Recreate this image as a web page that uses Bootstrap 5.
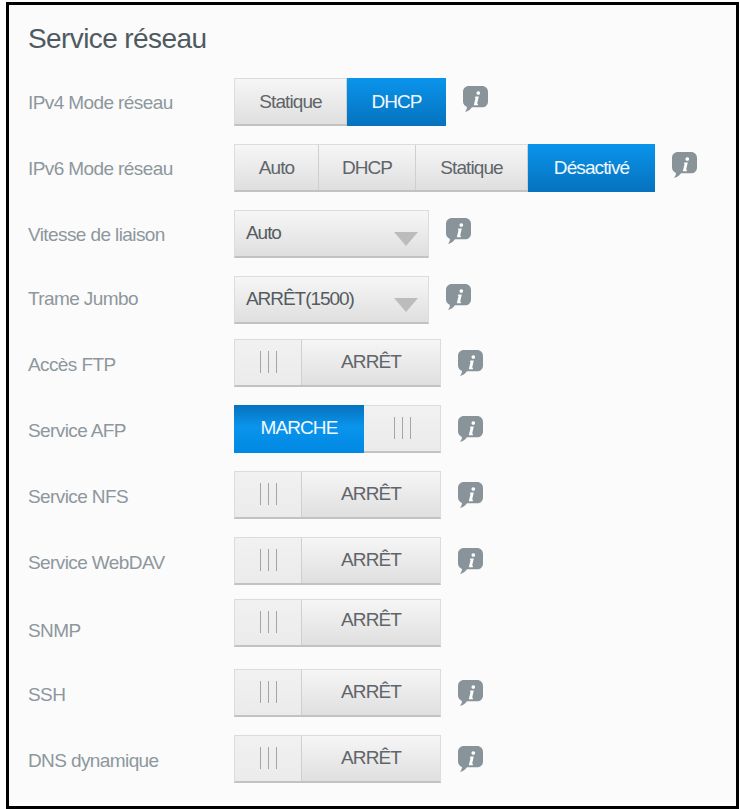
<!DOCTYPE html>
<html lang="fr">
<head>
<meta charset="utf-8">
<title>Service réseau</title>
<link href="https://cdn.jsdelivr.net/npm/bootstrap@5.3.0/dist/css/bootstrap.min.css" rel="stylesheet">
<style>
html, body { height: 809px; overflow: hidden; background: #fff; }
body { font-family: "Liberation Sans", Arial, sans-serif; }
.panel-net { width: 733px; height: 807px; margin: 2px 0 0 6px; border: 3px solid #000; background: #fbfbfb; box-shadow: inset 0 -4px 0 #fefefe; padding: 14px 0 0 19px; }
.panel-title { font-size: 28px; line-height: 40px; height: 40px; letter-spacing: -.6px; color: #4f5a60; margin: 0 0 19px; font-weight: 400; }
.net-row { height: 48px; margin-bottom: 18px; }
.net-label { width: 206px; flex: none; font-size: 19px; letter-spacing: -.6px; color: #8d979d; padding-top: 2px; }
.lbl-up { padding-top: 0; padding-bottom: 2px; }
.lbl-down { padding-top: 5px; }
.lbl-far { padding-top: 17px; }
.seg { display: flex; flex: none; height: 48px; border: 1px solid #dcdcdc; border-bottom: 2px solid #c2c2c2; background: linear-gradient(#f6f6f6, #dfdfdf); font-size: 19px; letter-spacing: -.9px; color: #5f6569; }
.seg-item { display: flex; align-items: center; justify-content: center; height: 100%; padding-top: 1px; border-right: 1px solid #cfcfcf; }
.seg-item:last-child { border-right: 0; }
.seg-on { background: linear-gradient(#0a94ec, #0672bd); color: #f2f9ff; border-right: 0; margin: -1px -1px -2px 0; height: 48px; }
.w-a { width: 112px; } .w-b { width: 99px; }
.w-c { width: 84px; } .w-d { width: 97px; } .w-e { width: 112px; } .w-f { width: 127px; }
.pick { width: 195px; justify-content: space-between; align-items: center; padding: 0 10px 0 11px; letter-spacing: -1.05px; color: #555b60; }
.pick-arrow { width: 0; height: 0; border-left: 12px solid transparent; border-right: 12px solid transparent; border-top: 14px solid #bcbcbc; margin-top: 10px; }
.sw { width: 207px; }
.sw-grip { width: 67px; height: 100%; flex: none; display: flex; justify-content: center; align-items: center; gap: 7px; background: linear-gradient(#f1f1f1, #ebebeb); border-right: 1px solid #cfcfcf; padding-bottom: 2px; }
.sw-grip span { width: 1px; height: 22px; background: #a5a5a5; }
.sw-text { flex: 1 1 auto; display: flex; align-items: center; justify-content: center; }
.sw-high .sw-text { padding-bottom: 4px; }
.sw-on { color: #5f6569; }
.sw-on .sw-text { width: 130px; flex: none; padding-bottom: 1px; margin: -1px 0 -2px -1px; height: 48px; color: #f2f9ff; background: linear-gradient(#0672bd 0, #0a94ec 45%, #0088e2); }
.sw-on .sw-grip { border-right: 0; flex: 1 1 auto; width: auto; }
.tip { width: 25px; height: 27px; flex: none; display: block; align-self: flex-start; margin-left: 17px; margin-top: 8px; }
.tip-low { margin-top: 11px; }
.gap-15 { margin-bottom: 15px; }
.gap-14 { margin-bottom: 14px; }
.gap-22 { margin-bottom: 22px; }
.defs-only { width: 0; height: 0; }
</style>
</head>
<body>
<svg class="defs-only position-absolute" aria-hidden="true">
  <symbol id="tip-i" viewBox="0 0 25 27">
    <path d="M6 0h13c3.500 0 6 2.500 6 6v9.500c0 3.500-2.500 5.800-6 5.800H9c-1.500 2.200-4 4.200-7 4.700 1.200-1.500 2-3.300 2-5C1.500 20 0 18 0 15.500V6c0-3.500 2.500-6 6-6z" fill="#89939a"/>
    <path d="M15.300 5.200a1.800 1.800 0 1 1-.01 0zM12.400 10.400h3.400l-1.700 7.300h1l-.4 1.500h-3.900l1.800-7.400h-.9z" fill="#fff"/>
  </symbol>
</svg>
<main class="panel-net">
  <h1 class="panel-title">Service réseau</h1>

  <div class="net-row d-flex align-items-center">
    <div class="net-label">IPv4 Mode réseau</div>
    <div class="seg"><div class="seg-item w-a">Statique</div><div class="seg-item seg-on w-b">DHCP</div></div>
    <svg class="tip"><use href="#tip-i"/></svg>
  </div>

  <div class="net-row d-flex align-items-center">
    <div class="net-label">IPv6 Mode réseau</div>
    <div class="seg"><div class="seg-item w-c">Auto</div><div class="seg-item w-d">DHCP</div><div class="seg-item w-e">Statique</div><div class="seg-item seg-on w-f">Désactivé</div></div>
    <svg class="tip"><use href="#tip-i"/></svg>
  </div>

  <div class="net-row d-flex align-items-center">
    <div class="net-label">Vitesse de liaison</div>
    <div class="seg pick"><span>Auto</span><i class="pick-arrow"></i></div>
    <svg class="tip"><use href="#tip-i"/></svg>
  </div>

  <div class="net-row d-flex align-items-center gap-15">
    <div class="net-label lbl-up">Trame Jumbo</div>
    <div class="seg pick"><span>ARRÊT(1500)</span><i class="pick-arrow"></i></div>
    <svg class="tip"><use href="#tip-i"/></svg>
  </div>

  <div class="net-row d-flex align-items-center">
    <div class="net-label lbl-down">Accès FTP</div>
    <div class="seg sw"><div class="sw-grip"><span></span><span></span><span></span></div><div class="sw-text">ARRÊT</div></div>
    <svg class="tip tip-low"><use href="#tip-i"/></svg>
  </div>

  <div class="net-row d-flex align-items-center">
    <div class="net-label lbl-down">Service AFP</div>
    <div class="seg sw sw-on"><div class="sw-text">MARCHE</div><div class="sw-grip"><span></span><span></span><span></span></div></div>
    <svg class="tip tip-low"><use href="#tip-i"/></svg>
  </div>

  <div class="net-row d-flex align-items-center">
    <div class="net-label lbl-down">Service NFS</div>
    <div class="seg sw"><div class="sw-grip"><span></span><span></span><span></span></div><div class="sw-text">ARRÊT</div></div>
    <svg class="tip tip-low"><use href="#tip-i"/></svg>
  </div>

  <div class="net-row d-flex align-items-center gap-14">
    <div class="net-label lbl-down">Service WebDAV</div>
    <div class="seg sw"><div class="sw-grip"><span></span><span></span><span></span></div><div class="sw-text">ARRÊT</div></div>
    <svg class="tip tip-low"><use href="#tip-i"/></svg>
  </div>

  <div class="net-row d-flex align-items-center gap-22">
    <div class="net-label lbl-far">SNMP</div>
    <div class="seg sw sw-high"><div class="sw-grip"><span></span><span></span><span></span></div><div class="sw-text">ARRÊT</div></div>
  </div>

  <div class="net-row d-flex align-items-center">
    <div class="net-label lbl-down">SSH</div>
    <div class="seg sw"><div class="sw-grip"><span></span><span></span><span></span></div><div class="sw-text">ARRÊT</div></div>
    <svg class="tip tip-low"><use href="#tip-i"/></svg>
  </div>

  <div class="net-row d-flex align-items-center">
    <div class="net-label lbl-down">DNS dynamique</div>
    <div class="seg sw"><div class="sw-grip"><span></span><span></span><span></span></div><div class="sw-text">ARRÊT</div></div>
    <svg class="tip tip-low"><use href="#tip-i"/></svg>
  </div>
</main>
<script src="https://cdn.jsdelivr.net/npm/bootstrap@5.3.0/dist/js/bootstrap.bundle.min.js"></script>
</body>
</html>
